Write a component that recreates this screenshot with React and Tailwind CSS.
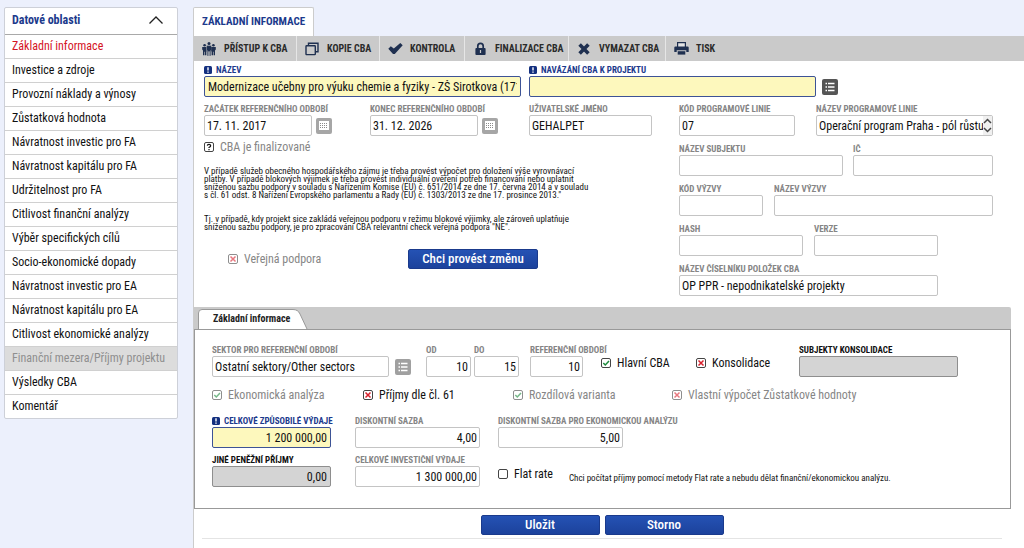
import React, { useId } from "react";

const MENU = [
  "Základní informace",
  "Investice a zdroje",
  "Provozní náklady a výnosy",
  "Zůstatková hodnota",
  "Návratnost investic pro FA",
  "Návratnost kapitálu pro FA",
  "Udržitelnost pro FA",
  "Citlivost finanční analýzy",
  "Výběr specifických cílů",
  "Socio-ekonomické dopady",
  "Návratnost investic pro EA",
  "Návratnost kapitálu pro EA",
  "Citlivost ekonomické analýzy",
  "Finanční mezera/Příjmy projektu",
  "Výsledky CBA",
  "Komentář",
];

const INK = "#1f3050";

function PeopleIcon() {
  return (
    <svg width="14" height="14" viewBox="0 0 14 14" fill={INK} aria-hidden="true">
      <circle cx="2.6" cy="3.3" r="1.3" />
      <circle cx="7" cy="1.6" r="1.5" />
      <circle cx="11.4" cy="3.3" r="1.3" />
      <path d="M0.2 5h4.6v4.4H4.4v3.9H3V9.8H2.4v3.5H1V8.4L0.2 7.6z" />
      <path d="M4.5 3.6h5v4.8H8.8V14H7.4V9.6H6.6V14H5.2V8.4H4.5z" stroke="#cacaca" strokeWidth="0.4" />
      <path d="M9.2 5h4.6v2.6l-0.8 0.8v4.9h-1.4V9.8h-0.6v3.5H9.6V9.4H9.2z" />
    </svg>
  );
}

function CopyIcon() {
  return (
    <svg width="14" height="14" viewBox="0 0 14 14" fill="none" stroke={INK} strokeWidth="1.4" aria-hidden="true">
      <path d="M3.5 3.7V1.2h9.5v8.5h-2.6" />
      <rect x="1" y="3.8" width="9.3" height="8.8" rx="0.6" />
    </svg>
  );
}

function TickIcon() {
  return (
    <svg width="15" height="13" viewBox="0 0 15 13" fill={INK} aria-hidden="true">
      <path d="M0.3 6.8 2.8 4.2l3 2.4 6.5-5.6 2.4 2.2L6.8 12 5 12z" />
    </svg>
  );
}

function LockIcon() {
  return (
    <svg width="11" height="14" viewBox="0 0 11 14" aria-hidden="true">
      <path d="M2.8 6.5V4a2.7 2.7 0 0 1 5.4 0v2.5" fill="none" stroke={INK} strokeWidth="1.7" />
      <rect x="0.4" y="6" width="10.2" height="7" rx="1" fill={INK} />
      <path d="M4.9 8h1.2v3H4.9z" fill="#cacaca" />
    </svg>
  );
}

function CrossIcon() {
  return (
    <svg width="12" height="12" viewBox="0 0 12 12" stroke={INK} strokeWidth="3.6" aria-hidden="true">
      <path d="M1.6 1.6l8.8 8.8M10.4 1.6l-8.8 8.8" />
    </svg>
  );
}

function PrinterIcon() {
  return (
    <svg width="15" height="13" viewBox="0 0 15 13" aria-hidden="true">
      <path d="M3.6 5V0.7h7.8V5" fill="#e4e4e4" stroke={INK} strokeWidth="1.2" />
      <path d="M1.5 4.4h12a1.2 1.2 0 0 1 1.2 1.2V10h-2.4V8.2H2.7V10H0.3V5.6a1.2 1.2 0 0 1 1.2-1.2z" fill={INK} />
      <path d="M3.7 9.2h7.6v3.4H3.7z" fill={INK} />
    </svg>
  );
}

const TOOLS = [
  ["PŘÍSTUP K CBA", PeopleIcon, "w-[103px]"],
  ["KOPIE CBA", CopyIcon, "w-[83px]"],
  ["KONTROLA", TickIcon, "w-[85px]"],
  ["FINALIZACE CBA", LockIcon, "w-[104px]"],
  ["VYMAZAT CBA", CrossIcon, "w-[97px]"],
  ["TISK", PrinterIcon, "w-[60px]"],
];

const TONES = {
  plain: "border-[#c4c4c4] bg-white px-[2px]",
  required: "border-[#3d5396] bg-[#fdf8bd] px-[3px]",
  locked: "border-[#8e8e8e] bg-[#d4d4d4] px-[3px]",
};

const LABELS = {
  plain: "text-[#858585]",
  required: "text-[#1c3a8c]",
  locked: "text-[#111111]",
};

function Field({ label, value = "", tone = "plain", width, right = false, children }) {
  const id = useId();
  return (
    <div className={`flex flex-col gap-px ${width}`}>
      <label htmlFor={id} className={`flex h-[10px] items-center gap-1 whitespace-nowrap text-[9px] leading-[10px] font-bold ${LABELS[tone]}`}>
        {tone === "required" && (
          <svg width="8" height="8" viewBox="0 0 8 8" className="shrink-0" aria-hidden="true">
            <rect width="8" height="8" rx="1.5" fill="#14307f" />
            <path d="M3.3 1.2h1.4v3.4H3.3zM3.3 5.4h1.4v1.4H3.3z" fill="#fff" />
          </svg>
        )}
        {label}
      </label>
      <div className="flex items-center gap-1">
        <input
          id={id}
          defaultValue={value}
          className={`h-[21px] min-w-0 flex-1 rounded-[2px] border text-[12px] text-[#111111] outline-none ${right ? "text-right" : ""} ${TONES[tone]}`}
        />
        {children}
      </div>
    </div>
  );
}

function CalendarButton({ label }) {
  return (
    <button type="button" aria-label={label} className="flex size-4 items-center justify-center rounded-[2px] bg-[#a6a6a6]">
      <svg width="10" height="10" viewBox="0 0 10 10" aria-hidden="true">
        <rect width="10" height="9" fill="#fff" />
        <path d="M1 2.5h8M1 4.5h8M1 6.5h8" stroke="#8a8a8a" strokeDasharray="1 1" />
      </svg>
    </button>
  );
}

function ListButton({ label, tone }) {
  return (
    <button type="button" aria-label={label} className={`flex size-4 items-center justify-center rounded-[2px] ${tone}`}>
      <svg width="10" height="10" viewBox="0 0 10 10" stroke="#fff" strokeWidth="1.3" aria-hidden="true">
        <path d="M0.5 1.5H2M0.5 5H2M0.5 8.5H2M3 1.5h6.5M3 5h6.5M3 8.5h6.5" />
      </svg>
    </button>
  );
}

function Check({ label, mark = "none", faded = false, width = "" }) {
  return (
    <label className={`flex h-4 items-center gap-[6px] whitespace-nowrap text-[12px] leading-4 ${faded ? "text-[#868686]" : "text-[#111111]"} ${width}`}>
      <span className={`relative flex size-[10px] ${faded && mark !== "unknown" ? "opacity-60" : ""}`}>
        <input type="checkbox" defaultChecked={mark === "yes"} className="size-[10px] appearance-none rounded-[2px] border border-[#444444] bg-white" />
        <svg width="10" height="10" viewBox="0 0 10 10" fill="none" strokeWidth="1.5" className="pointer-events-none absolute inset-0" aria-hidden="true">
          {mark === "yes" && <path d="M2.3 5l2 2L8 3" stroke="#1c8a3c" />}
          {mark === "no" && <path d="M2.5 2.5l5 5M7.5 2.5l-5 5" stroke="#d8202c" />}
          {mark === "unknown" && <path d="M3.3 3.6Q3.4 2.4 5 2.4T6.7 3.8Q6.7 4.6 5 5.5V6M5 7v1.2" stroke="#111" strokeWidth="1.2" />}
        </svg>
      </span>
      {label}
    </label>
  );
}

function BlueButton({ children, width }) {
  return (
    <button type="button" className={`h-5 rounded-[2px] border border-[#1a3a8c] bg-linear-to-b from-[#2552b4] to-[#1c429c] text-[13px] leading-4 font-medium text-white ${width}`}>
      {children}
    </button>
  );
}

function Sidebar() {
  return (
    <nav className="w-[174px] shrink-0 self-start rounded-[2px] border border-[#cdd0d8] bg-white">
      <button type="button" className="flex h-[27px] w-full items-center justify-between border-b border-[#a9a9a9] pr-[14px] pb-[2px] pl-[7px] text-[12px] font-bold text-[#1c3a8c]">
        Datové oblasti
        <svg width="14" height="8" viewBox="0 0 14 8" fill="none" stroke="#222" strokeWidth="1.3" aria-hidden="true">
          <path d="M0.5 7.5 7 1l6.5 6.5" />
        </svg>
      </button>
      <ul className="divide-y divide-[#d0d0d0]">
        {MENU.map((item, i) => (
          <li key={item} className={i === 13 ? "bg-[#dcdcdc]" : ""}>
            <a href="#" className={`block pl-[7px] text-[12px] leading-[23px] whitespace-nowrap ${i === 0 ? "text-[#d4141f]" : i === 13 ? "text-[#8f8f8f]" : "text-[#111111]"}`}>
              {item}
            </a>
          </li>
        ))}
      </ul>
    </nav>
  );
}

function Toolbar() {
  return (
    <div className="flex h-[25px] divide-x divide-[#e6e6e6] bg-[#cacaca]">
      {TOOLS.map(([name, Icon, width]) => (
        <button type="button" key={name} className={`flex items-center text-[10px] font-bold whitespace-nowrap text-[#2b2b2b] ${width}`}>
          <span className="flex w-[30px] shrink-0 justify-center">
            <Icon />
          </span>
          {name}
        </button>
      ))}
    </div>
  );
}

function General() {
  return (
    <section className="flex flex-col gap-[7px] pt-1 pr-[31px] pl-[10px]">
      <div className="flex gap-2">
        <Field label="NÁZEV" tone="required" width="w-[317px]" value="Modernizace učebny pro výuku chemie a fyziky - ZŠ Sirotkova (1711:" />
        <Field label="NAVÁZÁNÍ CBA K PROJEKTU" tone="required" width="w-[309px]">
          <ListButton label="Vybrat projekt" tone="ml-[2px] bg-[#555555]" />
        </Field>
      </div>
      <div className="flex justify-between">
        <div className="w-[448px]">
          <div className="flex">
            <Field label="ZAČÁTEK REFERENČNÍHO ODBOBÍ" value="17. 11. 2017" width="mr-[38px] w-[128px]">
              <CalendarButton label="Vybrat začátek" />
            </Field>
            <Field label="KONEC REFERENČNÍHO OBDOBÍ" value="31. 12. 2026" width="mr-[31px] w-[128px]">
              <CalendarButton label="Vybrat konec" />
            </Field>
            <Field label="UŽIVATELSKÉ JMÉNO" value="GEHALPET" width="w-[123px]" />
          </div>
          <div className="pt-[3px]">
            <Check label="CBA je finalizované" mark="unknown" faded />
          </div>
          <p className="w-[392px] pt-3 text-[9px] leading-2 text-[#111111]">
            V případě služeb obecného hospodářského zájmu je třeba provést výpočet pro doložení výše vyrovnávací
            <br />
            platby. V případě blokových výjimek je třeba provést individuální ověření potřeb financování nebo uplatnit
            <br />
            sníženou sazbu podpory v souladu s Nařízením Komise (EU) č. 651/2014 ze dne 17. června 2014 a v souladu
            <br />
            s čl. 61 odst. 8 Nařízení Evropského parlamentu a Rady (EU) č. 1303/2013 ze dne 17. prosince 2013."
          </p>
          <p className="w-[392px] pt-4 text-[9px] leading-2 text-[#111111]">
            Tj. v případě, kdy projekt sice zakládá veřejnou podporu v režimu blokové výjimky, ale zároveň uplatňuje
            <br />
            sníženou sazbu podpory, je pro zpracování CBA relevantní check veřejná podpora "NE".
          </p>
          <div className="flex items-center pt-[18px] pl-6">
            <Check label="Veřejná podpora" mark="no" faded width="w-[180px]" />
            <BlueButton width="w-[130px]">Chci provést změnu</BlueButton>
          </div>
        </div>
        <div className="flex w-[314px] flex-col gap-2">
          <div className="flex justify-between">
            <Field label="KÓD PROGRAMOVÉ LINIE" value="07" width="w-[116px]" />
            <div className="relative w-[177px]">
              <Field label="NÁZEV PROGRAMOVÉ LINIE" value="Operační program Praha - pól růstu" width="w-full" />
              <span className="absolute right-px bottom-px flex h-[19px] w-[9px] items-center justify-center bg-[#f0f0f0]">
                <svg width="9" height="15" viewBox="0 0 9 15" fill="none" stroke="#444" strokeWidth="1.5" aria-hidden="true">
                  <path d="M1 5l3.500-3.500L8 5M1 10l3.500 3.500L8 10" />
                </svg>
              </span>
            </div>
          </div>
          <div className="flex justify-between">
            <Field label="NÁZEV SUBJEKTU" width="w-[164px]" />
            <Field label="IČ" width="w-[140px]" />
          </div>
          <div className="flex justify-between">
            <Field label="KÓD VÝZVY" width="w-[84px]" />
            <Field label="NÁZEV VÝZVY" width="w-[219px]" />
          </div>
          <div className="flex gap-[11px]">
            <Field label="HASH" width="w-[124px]" />
            <Field label="VERZE" width="w-[124px]" />
          </div>
          <Field label="NÁZEV ČÍSELNÍKU POLOŽEK CBA" value="OP PPR - nepodnikatelské projekty" width="w-[259px]" />
        </div>
      </div>
    </section>
  );
}

function Details() {
  return (
    <section className="mt-[11px] mr-[13px]">
      <div className="flex h-[22px] items-end rounded-tr-[2px] bg-[#cacaca] pl-1">
        <div className="relative h-5 w-[110px]">
          <svg width="110" height="20" viewBox="0 0 110 20" className="absolute inset-0" aria-hidden="true">
            <path d="M0.5 20V4Q0.5 0.5 4 0.5H95Q100 0.5 102 5L109 20" fill="#fff" stroke="#999" />
          </svg>
          <h2 className="relative pl-[15px] text-[10px] leading-5 font-bold text-[#222222]">Základní informace</h2>
        </div>
      </div>
      <div className="flex flex-col border border-[#999999] px-[17px] pt-[15px] pb-[21px]">
        <div className="flex">
          <Field label="SEKTOR PRO REFERENČNÍ OBDOBÍ" value="Ostatní sektory/Other sectors" width="mr-[15px] w-[199px]">
            <ListButton label="Vybrat sektor" tone="ml-[2px] bg-[#a0a0a0]" />
          </Field>
          <Field label="OD" value="10" right width="mr-[3px] w-[45px]" />
          <Field label="DO" value="15" right width="mr-[11px] w-[45px]" />
          <Field label="REFERENČNÍ OBDOBÍ" value="10" right width="mr-[18px] w-[53px]" />
          <div className="flex pt-[10px]">
            <Check label="Hlavní CBA" mark="yes" width="w-[95px]" />
            <Check label="Konsolidace" mark="no" width="w-[103px]" />
          </div>
          <Field label="SUBJEKTY KONSOLIDACE" tone="locked" width="w-[159px]" />
        </div>
        <div className="flex pt-[10px]">
          <Check label="Ekonomická analýza" mark="yes" faded width="w-[151px]" />
          <Check label="Příjmy dle čl. 61" mark="no" width="w-[150px]" />
          <Check label="Rozdílová varianta" mark="yes" faded width="w-[159px]" />
          <Check label="Vlastní výpočet Zůstatkové hodnoty" mark="no" faded />
        </div>
        <div className="flex pt-[13px]">
          <Field label="CELKOVÉ ZPŮSOBILÉ VÝDAJE" value="1 200 000,00" tone="required" right width="mr-6 w-[119px]" />
          <Field label="DISKONTNÍ SAZBA" value="4,00" right width="mr-[18px] w-[125px]" />
          <Field label="DISKONTNÍ SAZBA PRO EKONOMICKOU ANALÝZU" value="5,00" right width="w-[125px]" />
        </div>
        <div className="flex pt-[7px]">
          <Field label="JINÉ PENĚŽNÍ PŘÍJMY" value="0,00" tone="locked" right width="mr-6 w-[119px]" />
          <Field label="CELKOVÉ INVESTIČNÍ VÝDAJE" value="1 300 000,00" right width="mr-[18px] w-[125px]" />
          <div className="flex items-center gap-4 pt-[5px]">
            <Check label="Flat rate" />
            <p className="pt-2 text-[9px] leading-3 text-[#111111]">
              Chci počítat příjmy pomocí metody Flat rate a nebudu dělat finanční/ekonomickou analýzu.
            </p>
          </div>
        </div>
      </div>
    </section>
  );
}

export default function App() {
  return (
    <div className="flex min-h-screen gap-[15px] bg-[#ecf0fc] pt-[7px] pl-1 font-['Roboto_Condensed','Roboto',sans-serif]">
      <Sidebar />
      <main className="flex min-w-0 flex-1 flex-col">
        <h1 className="h-[29px] self-start rounded-t-[2px] border border-b-0 border-[#cccccc] bg-white px-2 text-[11px] leading-7 font-bold whitespace-nowrap text-[#1c3a8c]">
          ZÁKLADNÍ INFORMACE
        </h1>
        <div className="flex-1 border-l border-[#cccccc] bg-white">
          <Toolbar />
          <General />
          <Details />
          <div className="mr-[22px] ml-2 flex justify-center gap-[5px] border-b border-[#e4e4e4] pt-[6px] pb-[3px]">
            <BlueButton width="w-[119px]">Uložit</BlueButton>
            <BlueButton width="w-[119px]">Storno</BlueButton>
          </div>
        </div>
      </main>
    </div>
  );
}
